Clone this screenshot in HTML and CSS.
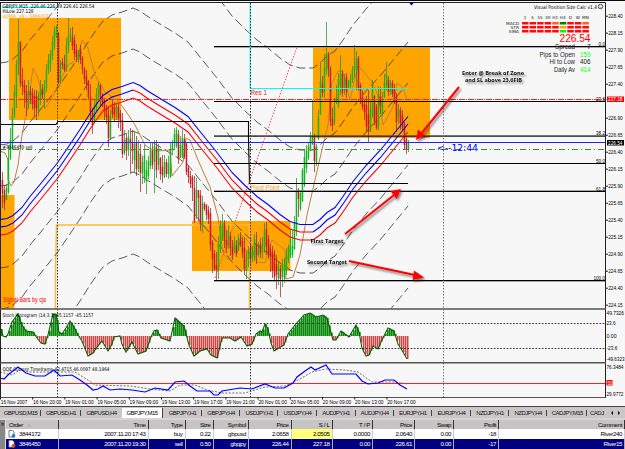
FILE: index.html
```html
<!DOCTYPE html>
<html lang="en">
<head>
<meta charset="utf-8">
<title>GBPJPY,M15</title>
<link rel="stylesheet" href="styles.css">
</head>
<body>
<main class="terminal">
<svg class="chart" viewBox="0 0 625 406" width="625" height="406">
  <defs>
    <clipPath id="pane"><rect x="1" y="3" width="604" height="306"/></clipPath>
    <filter id="shadow" x="-20%" y="-30%" width="150%" height="180%"><feDropShadow dx="1.5" dy="2" stdDeviation="0.8" flood-color="#000" flood-opacity=".5"/></filter>
  </defs>
  <rect width="625" height="406" fill="#f7f7f7"/>
  <g clip-path="url(#pane)">
    <g fill="#ffa500">
      <rect x="9" y="18" width="112" height="102"/>
      <rect x="0" y="195" width="14.5" height="115"/>
      <rect x="192" y="221" width="98.500" height="50"/>
      <rect x="313" y="47.500" width="117" height="90.500"/>
    </g>
    <path d="M55.500 310V272L56.500 225H249.500V310" fill="none" stroke="#ffb83c" stroke-width="1.500"/>
    <g id="bands" class="band"></g>
    <path class="tan" d="M0 151L5 153L8 160L8 180L11 186L14 182L18 165L22 135L28 105L33 68L38 78L45 109L52 98L58 85L68 65L77 60L82 40L88 48L95 75L105 92L118 101L125 110L135 125L145 145L152 150L158 151L170 150L172 176L183 162L186 138L190 140L198 160L210 187L218 217L223 253L228 260L237 253L242 235L250 243L257 262L265 263L272 240L285 250L286 279L293 277L300 255L307 215L320 158L328 125L332 83L338 71L343 72L350 100L358 65L372 82L378 95L383 125L393 107L397 83L403 88L407 100"/>
    <g id="candles"></g>
    <g id="averages" fill="none" stroke-width="1.100"></g>
  </g>
  <path class="thin" stroke="#22f" d="M0 142.500H606"/>
  <path class="thin" stroke="#f22" stroke-dasharray="6 1 1 1" d="M0 99.500H606"/>
  <path class="thin" stroke="#3b8f3b" stroke-dasharray="6 3 1 3" d="M0 149.500H606"/>
  <path stroke="#888" opacity=".7" d="M214 47.500H605M214 135.500H605M214 190.500H605M214 281.500H605"/>
  <path stroke="#000" d="M214 46.500H605M214 101.500H605M214 136.200H605M214 163.500H605M214 191.500H605M214 280.500H605"/>
  <path fill="none" stroke="#000" stroke-width="1.100" d="M0 124.500H56L58 121.500H248.500V138L249.500 183.500H408"/>
  <path fill="none" stroke="#0ff" stroke-width="1.200" d="M2 7.500H55M250.200 2V88.500H408"/>
  <path fill="none" stroke="#f44" stroke-dasharray="1.500 1.500" d="M215 278L297 47"/>
  <path fill="none" stroke="#333" stroke-dasharray="1.500 1.500" d="M57.500 3V397M250.500 3V397"/>
  <path fill="none" stroke="#777" stroke-dasharray="1.500 1.500" d="M443.500 3V397"/>
  <path d="M409 2.500h5l-2.500 3z" fill="#00a"/>

  <g id="stoch"></g>
  <path stroke="#333" stroke-dasharray="1.700 1.500" d="M1 323.500H605M1 348.500H605"/>
  <path fill="none" stroke="#333" stroke-width=".7" stroke-dasharray="2 1.500" d="M0 372L12 375L20 370L30 372L75 372L88 380L95 385L130 386L150 389L170 391L180 385L195 385L207 390L222 393L245 393L265 387L285 386L300 379L312 372L326 369L345 370L358 372L372 382L395 382L407 384"/>
  <path stroke="#f22" d="M1 383.500H605"/>
  <path fill="none" stroke="#00f" stroke-width="1.200" d="M0 378L4 379L9 374L18 367L26 373L35 376L45 376L54 370L60 376L72 375L80 380L87 385L93 390L98 389L103 386L110 390L120 389L132 390L145 392L155 388L168 390L175 382L184 381L190 386L197 391L210 391L214 395L218 395L222 391L240 388L252 389L265 384L275 388L284 388L293 383L297 377L305 371L311 367L315 370L326 365L332 374L356 374L362 381L368 384L378 383L385 380L394 380L400 385L407 389"/>

  <rect width="625" height="1" fill="#0b0b0b"/>
  <path fill="none" stroke="#222" d="M0 2.500H605.500V397M.5 2.500V397"/>
  <path stroke="#555" stroke-width="1.600" d="M0 309H606M0 362.800H606"/>
  <path stroke="#555" d="M0 397.500H606"/>
  <g id="ticks" stroke="#222"></g>

  <g class="tiny" id="scale"></g>
  <rect x="607" y="96.500" width="17" height="5.500" fill="red"/><text class="tiny white" x="608" y="101.300" textLength="14.500">227.18</text>
  <rect x="607" y="140" width="17" height="5.500" fill="#000"/><text class="tiny white" x="608" y="144.800" textLength="14.500">226.54</text>
  <rect x="606.500" y="380" width="6" height="5.500" fill="red"/><text class="tiny white" x="607.500" y="384.800" textLength="4.500">50</text>

  <g class="label">
    <text x="2.500" y="8.400" textLength="92">GBPJPY,M15&#160; 226.46 226.59 226.41 226.54</text>
    <text x="2.500" y="13.300" textLength="31">HiLow 227.128</text>
    <text x="2.500" y="18.200" textLength="48" fill="#ffa500">xpMA_v9 - SMA(62)</text>
    <text x="2.500" y="149" textLength="30">#3846450 sell</text>
    <text x="2.500" y="317" textLength="91">Stoch Histogram (14,3,3) 45.1157 -45.1157</text>
    <text x="2.500" y="370.500" textLength="107">QQE Current Timeframe 42.4715 46.0097 48.1964</text>
    <text x="534" y="9" textLength="63">Visual Position Size Calc v1.4</text>
  </g>
  <circle cx="600.500" cy="6.500" r="2.300" fill="none" stroke="#222" stroke-width=".7"/><path d="M599.500 7.200q1 1 2 0M599.600 5.500v.6M601.400 5.500v.6" stroke="#222" stroke-width=".5" fill="none"/>
  <g class="arial">
    <text x="3" y="302" textLength="43" fill="red">Signal Bars by cja</text>
    <text class="res" x="250.500" y="94.800" textLength="16.500">Res 1</text>
    <text x="250.500" y="189.500" textLength="29" fill="#ffa500">Pivot Point</text>
    <text class="price" x="559.500" y="41.800" textLength="31">226.54</text>
    <text x="555" y="49.300" textLength="20">Spread</text><text x="587" y="49.300">7</text>
    <text x="539.500" y="57" textLength="35.500">Pips to Open</text><text x="580" y="57" textLength="10.500" fill="#0f0">159</text>
    <text x="549.500" y="64.300" textLength="25.500">Hi to Low</text><text x="580" y="64.300" textLength="10.500">406</text>
    <text x="554" y="71.800" textLength="21">Daily Av</text><text x="580" y="71.800" textLength="10.500" fill="#0f0">414</text>
  </g>
  <text class="count" x="437" y="151.300" textLength="41">&lt;--12:44</text>
  <g class="signal" id="signals"></g>
  <g class="note" filter="url(#shadow)">
    <text x="462" y="75" textLength="62">Enter @ Break of Zone</text>
    <text x="465" y="82" textLength="57">and SL above 23.6FIB</text>
    <text x="310.500" y="242.700" textLength="33">First Target</text>
    <text x="307" y="264" textLength="40">Second Target</text>
  </g>
  <g filter="url(#shadow)" stroke="#f00" stroke-width="2" fill="#f00">
    <path d="M459 87L421 134"/><path stroke="none" d="M416 140L418 129.500L425 135.500z"/>
    <path d="M345 234L394 195"/><path stroke="none" d="M401 189L396.500 199L390.500 191z"/>
    <path d="M349 261L415 275"/><path stroke="none" d="M424 277.500L412.500 280L414 270.500z"/>
  </g>
</svg>
<nav class="tabs">
  <span class="tab t42">GBPUSD,M15</span><span class="tab t40">GBPUSD,H1</span><span class="tab t41 plain">GBPUSD,H4</span><span class="tab t41 active">GBPJPY,M15</span><span class="tab t39">GBPJPY,H1</span><span class="tab t38">GBPJPY,H4</span><span class="tab t38">USDJPY,H1</span><span class="tab t38">USDJPY,H4</span><span class="tab t39">AUDJPY,H1</span><span class="tab t38">AUDJPY,H4</span><span class="tab t38">EURJPY,H1</span><span class="tab t39">EURJPY,H4</span><span class="tab t38">NZDJPY,H1</span><span class="tab t38">NZDJPY,H4</span><span class="tab t43">CADJPY,M15</span><span class="tab last">CADJ</span><span class="arrows"><i class="left"></i><i class="right"></i></span>
</nav>
<section class="orders">
  <aside class="close">×</aside>
  <div class="grid">
    <div class="row head"><span class="first">Order <i>△</i></span><span>Time</span><span>Type</span><span>Size</span><span>Symbol</span><span>Price</span><span>S / L</span><span>T / P</span><span>Price</span><span>Swap</span><span>Profit</span><span>Comment</span></div>
    <div class="row"><span class="first"><svg class="icon" viewBox="0 0 8 8"><path d="M1 .5h3.500l1.500 1.500v5H1z" fill="#fff" stroke="#555" stroke-width=".8"/><circle cx="5.500" cy="5.800" r="1.900" fill="#1683c8"/></svg>3844172</span><span>2007.11.20 17:43</span><span>buy</span><span>0.22</span><span>gbpusd</span><span>2.0658</span><span class="stop">2.0505</span><span>0.0000</span><span>2.0640</span><span>0.00</span><span>-18</span><span>River240</span></div>
    <div class="row selected"><span class="first"><svg class="icon" viewBox="0 0 8 8"><path d="M1 .5h3.500l1.500 1.500v5H1z" fill="#fff" stroke="#99a" stroke-width=".8"/><circle cx="5.500" cy="5.800" r="1.900" fill="#d84a28"/></svg>3846450</span><span>2007.11.20 19:30</span><span>sell</span><span>0.50</span><span>gbpjpy</span><span>226.44</span><span>227.18</span><span>0.00</span><span>226.61</span><span>0.00</span><span>-17</span><span>River15</span></div>
  </div>
</section>
</main>
<script src="chart.js"></script>
</body>
</html>
```
FILE: styles.css
```css
* { box-sizing: border-box; }
body { margin: 0; background: #f7f7f7; font-family: "Liberation Sans", Arial, sans-serif; overflow: hidden; }
.terminal { width: 625px; height: 449px; display: flex; flex-direction: column; }
.chart { display: block; flex: none; }
.chart text { white-space: pre; }
.band { fill: none; stroke: #333; stroke-width: .8; stroke-dasharray: 9 4; }
.tan { fill: none; stroke: #c08040; stroke-width: 1; }
.thin { stroke-width: 1; }
.tiny { font: 5.4px "Liberation Sans Narrow", "Liberation Sans", sans-serif; fill: #000; }
.chart .white { fill: #fff; }
.label { font: 5px "DejaVu Sans Condensed", "DejaVu Sans", sans-serif; fill: #000; }
.arial { font: 6.7px "Liberation Sans", sans-serif; fill: #222; }
.res { font-size: 7px; fill: #d22; }
.price { font-size: 10px; fill: red; }
.count { font: 8.5px "DejaVu Sans", sans-serif; fill: #00f; }
.signal { font: 4.2px "DejaVu Sans", sans-serif; fill: #111; }
.note { font: bold 6px "Open Sans", sans-serif; fill: #111; }
.tabs { height: 14px; flex: none; display: flex; align-items: center; background: #cbc7c8; border-top: 1px solid #444; border-bottom: 2px solid #d8d4d4; font-size: 6px; color: #111; overflow: hidden; }
.tab { flex: none; height: 10px; line-height: 10px; text-align: center; white-space: nowrap; letter-spacing: -.5px; background: linear-gradient(#444, #444) right center / 1px 6px no-repeat; }
.plain { background: none; }
.active { background: #fff; border-right: 1px solid #444; color: #000; }
.t38 { width: 38.2px; } .t39 { width: 39px; } .t40 { width: 40px; } .t41 { width: 41px; } .t42 { width: 41px; } .t43 { width: 40px; }
.last { width: 19px; background: none; }
.arrows { flex: 1; display: flex; justify-content: space-evenly; }
.arrows i { border: 2px solid transparent; }
.arrows .left { border-right-color: #000; border-left: 0; }
.arrows .right { border-left-color: #000; border-right: 0; }
.orders { flex: none; height: 29px; display: flex; }
.close { width: 6px; flex: none; background: #888; color: #111; font: 6px/8px "DejaVu Sans", sans-serif; border-right: 1px solid #ddd; }
.grid { flex: 1; min-width: 0; }
.row { display: grid; grid-template-columns: 53px 89.500px 37px 28px 35.500px 42.500px 41px 40.500px 42px 39px 45px 1fr; height: 10px; background: #fff; font-size: 6.2px; line-height: 10px; color: #000; }
.row span { padding-right: 2px; text-align: right; border-right: 1px solid #ccc; white-space: nowrap; letter-spacing: -.4px; }
.row .first { text-align: left; display: flex; align-items: center; padding-left: 1.500px; }
.row.head { background: #c6c4c4; height: 9px; line-height: 9px; }
.head span { border-right-color: #333; }
.row.head .first { padding-left: 3px; }
.head i { font: 4px "DejaVu Sans", sans-serif; margin-left: 5px; color: #777; }
.row.selected { background: #000080; color: #fff; }
.selected span { border-right-color: #aab; }
.stop { background: #ffff80; }
.icon { width: 8px; height: 8px; margin-right: 3.500px; flex: none; }
```
FILE: chart.js
```js
const NS = 'http://www.w3.org/2000/svg';
const add = (id, tag, attrs, text) => {
  const el = document.createElementNS(NS, tag);
  for (const k in attrs) el.setAttribute(k, attrs[k]);
  if (text !== undefined) el.textContent = text;
  document.getElementById(id).appendChild(el);
};
const line = pts => 'M' + pts.map(p => p.join(' ')).join('L');

// Moving average centre line; bands are vertical offsets of it.
const mid = [[0,227],[7,226],[13,223],[22,215],[30,204],[40,192],[57,171],[68,155],[80,137],[90,121],[97,111],[103,103],[112,97],[122,94],[133,90],[140,93],[147,98],[160,106],[175,115],[188,124],[200,139],[217,160],[232,180],[245,193],[257,204],[268,212],[280,222],[290,229],[300,232],[313,232],[320,227],[327,220],[335,215],[343,204],[353,189],[366,173],[380,158],[394,141],[408,124]];
const shift = (pts, dy) => pts.map(([x, y]) => [x, y + dy]);
[-164, -82, -41, 41, 82, 164].forEach(dy => add('bands', 'path', { d: line(shift(mid, dy)) }));
add('averages', 'path', { d: line(shift(mid, -7.5)), stroke: '#00f' });
add('averages', 'path', { d: line(mid.filter(p => p[0] <= 133)), stroke: '#00f' });
add('averages', 'path', { d: line(mid.filter(p => p[0] >= 133 && p[0] <= 313)), stroke: '#f00' });
add('averages', 'path', { d: line(mid.filter(p => p[0] >= 313)), stroke: '#00f' });
add('averages', 'path', { d: line(shift(mid, 8)), stroke: '#f00' });

// Candles: x, high, low, open, close (pixel rows).
const bars = `2 172 208 180 194|4 185 210 190 203|6 184 200 200 188|8 145 194 192 158|10 128 160 158 140|12 108 150 145 116|14 85 118 115 92|16 60 108 96 64|18 19 75 64 42|20 41 87 42 83|22 68 95 81 86|24 80 108 85 93|26 85 116 91 103|28 80 109 105 92|30 86 104 91 95|32 88 110 93 104|34 90 116 96 108|36 90 120 96 109|38 92 116 109 97|40 80 105 100 88|42 84 99 89 95|44 80 108 95 87|46 64 92 88 70|48 54 74 70 60|50 50 72 64 54|52 36 60 56 42|54 26 50 46 31|56 25 38 36 28|58 32 84 33 82|60 60 84 81 63|62 58 69 62 65|64 55 72 64 70|66 38 72 69 45|68 18 53 46 36|70 28 42 37 34|72 27 50 37 46|74 35 60 40 54|76 44 62 50 57|78 50 63 58 51|80 45 64 49 60|82 56 74 58 69|84 67 84 69 79|86 70 90 76 84|88 80 100 81 97|90 84 122 97 112|92 108 134 113 125|94 100 122 121 106|96 88 112 108 94|98 82 100 95 84|100 84 106 85 99|102 93 107 97 103|104 98 120 100 110|106 105 124 109 117|108 106 147 115 138|110 110 140 138 116|112 100 118 106 114|114 102 122 107 116|116 103 120 113 107|118 104 128 107 118|120 110 131 113 122|122 113 158 120 154|124 130 155 153 140|126 134 160 138 151|128 130 156 150 137|130 128 174 139 142|132 130 164 142 151|134 132 172 160 144|136 136 176 143 169|138 140 172 169 151|140 144 192 154 173|142 156 184 173 162|144 145 183 178 155|146 160 194 181 170|148 156 179 176 161|150 143 169 166 150|152 142 169 151 165|154 140 193 162 146|156 140 178 147 170|158 144 170 165 151|160 157 180 158 174|162 155 183 167 175|164 155 178 177 162|166 159 177 162 174|168 156 179 174 163|170 143 178 177 149|172 140 155 149 142|174 128 149 143 134|176 127 148 146 130|178 130 164 134 159|180 136 157 158 145|182 130 158 156 138|184 134 159 139 157|186 142 175 144 172|188 165 183 168 177|190 171 188 176 184|192 175 201 177 188|194 176 223 188 221|196 178 219 216 190|198 190 221 190 198|200 190 231 195 225|202 196 233 227 203|204 202 211 204 209|206 204 220 205 215|208 206 224 210 219|210 208 251 213 245|212 240 273 242 259|214 250 271 254 269|216 252 280 265 270|218 236 279 270 244|220 220 253 249 226|222 214 241 238 224|224 220 248 223 241|226 230 253 240 248|228 225 249 246 231|230 232 256 236 248|232 240 260 247 255|234 236 253 253 242|236 240 257 245 254|238 234 251 250 238|240 232 247 239 245|242 237 258 241 253|244 238 275 248 269|246 250 279 271 259|248 246 267 259 250|250 244 266 248 259|252 246 262 258 252|254 234 261 257 239|256 232 264 244 255|258 242 257 255 247|260 238 258 244 253|262 237 259 252 244|264 223 253 246 231|266 222 255 229 247|268 235 259 239 253|270 244 272 249 257|272 246 278 252 271|274 250 282 254 277|276 255 289 264 275|278 262 285 278 266|280 265 297 269 279|282 259 287 277 264|284 258 283 279 265|286 248 275 271 255|288 245 263 260 247|290 229 258 257 239|292 230 258 255 246|294 216 250 249 222|296 178 236 231 190|298 188 217 190 199|300 190 211 209 193|302 168 202 201 170|304 149 187 185 157|306 145 173 168 151|308 142 160 158 146|310 132 151 150 137|312 100 145 144 135|314 134 172 137 161|316 144 166 163 147|318 110 140 139 116|320 63 115 114 81|322 76 97 84 93|324 54 98 92 68|326 22 75 71 53|328 52 77 54 69|330 66 126 69 121|332 108 131 119 126|334 98 125 122 106|336 85 104 102 97|338 73 108 105 79|340 55 95 86 73|342 70 97 74 93|344 74 95 90 79|346 73 98 77 92|348 80 89 87 80|350 74 88 87 79|352 66 83 80 69|354 45 78 70 66|356 51 90 71 58|358 56 91 58 89|360 83 104 85 99|362 90 110 97 107|364 100 120 104 112|366 96 132 105 127|368 90 142 115 132|370 102 132 131 109|372 80 118 116 87|374 95 125 96 121|376 104 130 107 128|378 86 130 126 95|380 87 114 96 106|382 92 116 114 99|384 74 98 97 82|386 62 90 87 74|388 76 96 80 92|390 80 95 92 83|392 80 97 83 94|394 84 104 90 102|396 93 132 97 122|398 104 124 117 109|400 107 130 110 123|402 110 131 115 128|404 122 149 124 145|406 137 154 139 150|408 140 152 149 143`;
bars.split('|').forEach(s => {
  const [x, h, l, o, c] = s.split(' ').map(Number);
  const up = c < o;
  add('candles', 'path', { d: `M${x + .5} ${h}V${l}`, stroke: up ? '#168a16' : '#8a2020', 'stroke-width': .7 });
  add('candles', 'rect', { x: x - .3, y: Math.min(o, c), width: 1.5, height: Math.abs(o - c) || 1, fill: up ? '#0cb81a' : '#d8121e' });
});

// Stochastic histogram around its zero row.
const st = [[1,329],[3,336],[6,337],[8,334],[12,322],[18,314],[22,325],[26,331],[33,332],[37,338],[41,343],[45,344],[48,335],[53,314],[56,314],[59,332],[62,334],[66,328],[70,321],[74,327],[78,335],[82,341],[88,356],[93,353],[97,347],[102,341],[108,351],[112,344],[114,337],[120,336],[122,344],[126,352],[132,342],[138,354],[146,351],[151,337],[154,331],[157,330],[161,338],[170,341],[175,318],[184,326],[189,345],[194,356],[200,351],[207,349],[211,355],[217,358],[222,338],[230,338],[235,341],[241,337],[247,346],[252,344],[256,334],[260,331],[262,332],[265,324],[268,329],[271,343],[274,351],[284,345],[288,334],[295,325],[304,315],[310,313],[316,317],[323,315],[327,318],[333,340],[336,340],[341,331],[349,337],[356,325],[359,332],[362,348],[366,356],[369,355],[373,346],[378,349],[381,342],[388,328],[394,331],[398,344],[403,352],[407,359]];
const at = x => {
  const i = Math.max(1, st.findIndex(p => p[0] >= x));
  const [a, b] = [st[i - 1], st[i]];
  return a[1] + (b[1] - a[1]) * (x - a[0]) / (b[0] - a[0]);
};
for (let x = 1; x <= 407; x += 2) {
  const y = at(x);
  add('stoch', 'rect', { x, y: Math.min(y, 336), width: 2, height: Math.abs(y - 336), fill: y < 336 ? '#5db85d' : '#f3b6b6' });
  add('stoch', 'rect', { x, y: Math.min(y, 336), width: 1.2, height: Math.abs(y - 336), fill: y < 336 ? '#0c860c' : '#c94848' });
}
add('stoch', 'path', { d: line(st), fill: 'none', stroke: '#075f07', 'stroke-width': 1.1 });

// Price scale, fib levels and time axis.
['228.40','228.15','227.90','227.65','227.40','','226.90','226.65','','226.40','226.15','225.90','225.65','225.40','225.15','224.90','224.65','224.40','224.15'].forEach((t, i) => {
  const y = i < 9 ? 16.2 + i * 17 : 152.2 + (i - 9) * 17;
  if (!t) return;
  add('scale', 'text', { x: 608.2, y: y + 2, textLength: 14.5 }, t);
  add('ticks', 'path', { d: `M605 ${y}h3` });
});
[['49.7326',315,17.5],['23.6',325.3,9],['0.00',338,10],['-23.6',350.3,11],['-49.6323',361,18],['76.3484',368.7,17],['29.9772',396.3,17]].forEach(([t, y, w]) => add('scale', 'text', { x: 606.5, y, textLength: w }, t));
[['0.0',46,6.5],['23.6',100.7,9],['38.2',135,9],['50.0',163,9],['61.8',190.5,9],['100.0',280,11.5]].forEach(([t, y, w]) => add('scale', 'text', { x: 605 - w, y, textLength: w }, t));
['16 Nov 2007','16 Nov 20:00','19 Nov 01:00','19 Nov 05:00','19 Nov 09:00','19 Nov 13:00','19 Nov 17:00','19 Nov 21:00','20 Nov 01:00','20 Nov 05:00','20 Nov 09:00','20 Nov 13:00','20 Nov 17:00'].forEach((t, i) => {
  const x = i * 32.2;
  add('scale', 'text', { x: x + .8, y: 404.2, textLength: i ? 28.5 : 26.5 }, t);
  add('ticks', 'path', { d: `M${x + .5} 397v2.500` });
});

// Signal bars.
['1','5','15','30','H1','H4','D','W','MN'].forEach((t, c) => {
  const x = 522 + c * 7.55;
  add('signals', 'text', { x: x + 3, y: 18.5, 'text-anchor': 'middle' }, t);
  ['#ff0808', '#ff0808', '#ff0808'].forEach((f, r) => {
    const fill = c === 5 ? ['#008000', '#ffa500', '#00ff00'][r] : (c === 8 || c === 4) && r === 0 ? '#ff6020' : f;
    add('signals', 'rect', { x, y: 22 + r * 4, width: 6.5, height: 2.5, fill });
  });
});
[['MACD',506,24.5,13],['STR',510.5,28.500,8.5],['EMA',509,32.500,10]].forEach(([t, x, y, w]) => add('signals', 'text', { x, y, textLength: w }, t));

// Condense fixed-width labels evenly.
document.querySelectorAll('text[textLength]').forEach(t => t.setAttribute('lengthAdjust', 'spacingAndGlyphs'));
```
